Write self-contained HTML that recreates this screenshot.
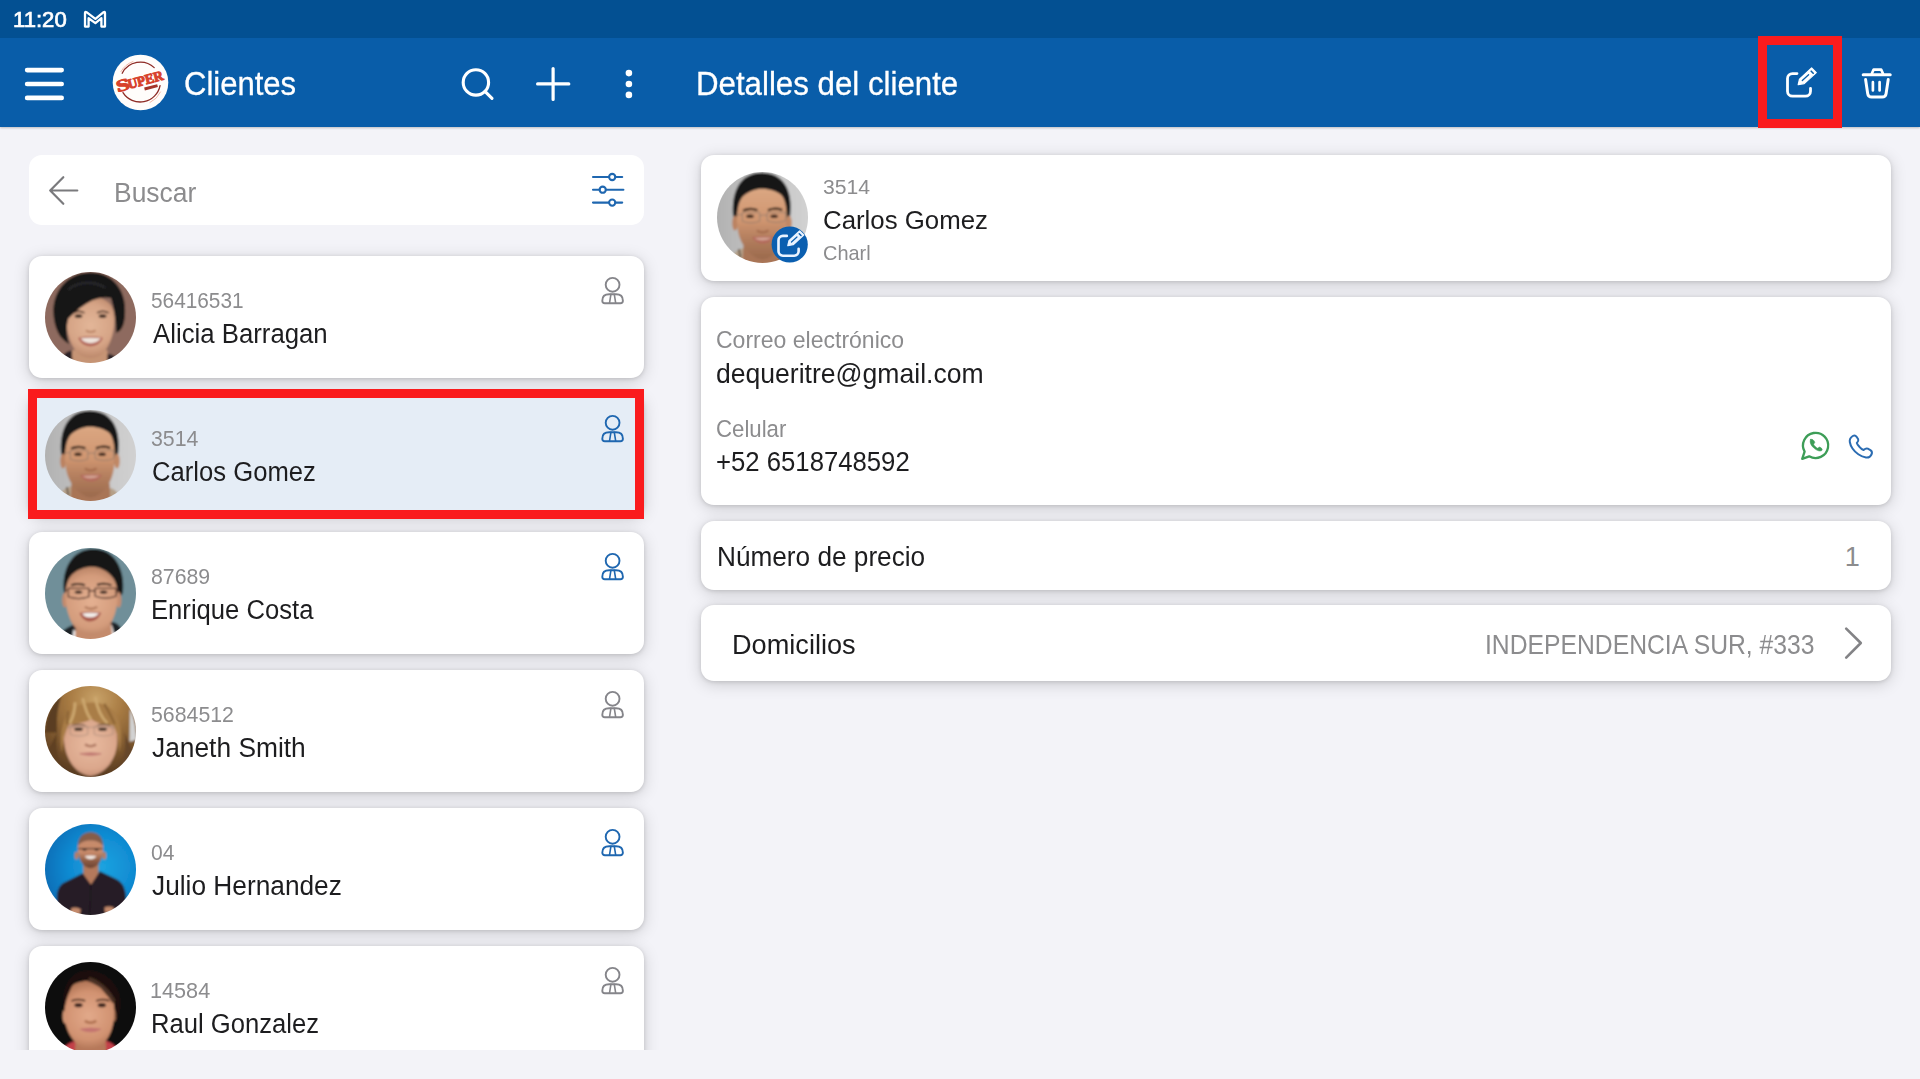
<!DOCTYPE html>
<html><head><meta charset="utf-8"><title>Clientes</title>
<style>
html,body{margin:0;padding:0}
body{width:1920px;height:1079px;overflow:hidden;background:#f3f3f8;position:relative;font-family:'Liberation Sans', sans-serif}
.abs{position:absolute}
.t{position:absolute;white-space:pre;line-height:1;transform-origin:0 0;font-family:'Liberation Sans', sans-serif}
.status{position:absolute;left:0;top:0;width:1920px;height:38px;background:#035092}
.header{position:absolute;left:0;top:38px;width:1920px;height:89px;background:#095da9;box-shadow:0 1px 2px rgba(0,0,0,.22)}
.card{position:absolute;background:#fff;border-radius:13px;box-shadow:0 3px 16px rgba(0,0,0,.17),0 1px 4px rgba(0,0,0,.13)}
.card.sel{background:#e5edf6}
.search{position:absolute;left:29px;top:155px;width:615px;height:70px;background:#fff;border-radius:13px}
.redbox{position:absolute;border:9px solid #fa1b1d;box-sizing:border-box}
#list{position:absolute;left:0;top:127px;width:672px;height:923px;overflow:hidden}
#listin{position:absolute;left:0;top:-127px;width:672px;height:1300px}
svg{position:absolute;overflow:visible}
</style></head><body>
<div id="list"><div id="listin">
<div class="search"></div>
<div class="card" style="left:29px;top:256px;width:615px;height:122px"></div>
<div class="card sel" style="left:29px;top:394px;width:615px;height:122px"></div>
<div class="card" style="left:29px;top:532px;width:615px;height:122px"></div>
<div class="card" style="left:29px;top:670px;width:615px;height:122px"></div>
<div class="card" style="left:29px;top:808px;width:615px;height:122px"></div>
<div class="card" style="left:29px;top:946px;width:615px;height:122px"></div>

<svg class="abs" style="left:44.5px;top:271.5px" width="91" height="91" viewBox="0 0 91 91">
<defs><clipPath id="cp0"><circle cx="45.5" cy="45.5" r="45.5"/></clipPath><filter id="bl0" x="-10%" y="-10%" width="120%" height="120%"><feGaussianBlur stdDeviation="9"/></filter><radialGradient id="f0" gradientUnits="userSpaceOnUse" cx="540" cy="640" r="360"><stop offset="0" stop-color="#e3b698"/><stop offset=".65" stop-color="#d6a486"/><stop offset="1" stop-color="#b98568"/></radialGradient></defs>
<g clip-path="url(#cp0)"><g transform="translate(-4.5 -5.5) scale(0.09268)"><g filter="url(#bl0)"><rect x="0" y="0" width="1079" height="1079" fill="#8e6b5f"/>
<path d="M330,1079 L345,900 H720 L740,1079 Z" fill="#c69475"/>
<path d="M200,1079 C215,960 270,915 335,905 L350,1079 Z M860,1079 C850,990 800,950 725,945 L715,1079Z" fill="#2b2327"/>
<path d="M275,560 C268,420 360,330 540,330 C720,330 805,420 800,580 C795,730 740,880 660,950 C600,1000 480,1000 420,950 C330,880 282,720 275,560 Z" fill="url(#f0)"/>
<path d="M350,500 Q410,465 475,500 M610,500 Q670,465 735,500" stroke="#3d2a20" stroke-width="16" fill="none"/>
<ellipse cx="410" cy="535" rx="42" ry="20" fill="#3a2a22"/><ellipse cx="670" cy="535" rx="42" ry="20" fill="#3a2a22"/>
<path d="M490,690 Q540,720 595,690" stroke="#b57d5e" stroke-width="20" fill="none"/>
<path d="M405,770 Q540,740 675,770 Q640,860 540,862 Q440,860 405,770Z" fill="#b4685a"/>
<path d="M435,775 Q540,760 650,775 Q620,825 540,828 Q460,825 435,775Z" fill="#efe4dc"/>
<path d="M140,520 C120,230 330,60 545,65 C760,60 935,240 912,520 C905,640 870,700 815,715 C815,600 800,470 760,340 C700,325 620,340 560,365 C470,410 380,480 300,560 C275,640 280,750 310,835 C200,780 150,660 140,520 Z" fill="#131313"/>
<path d="M300,250 C400,160 580,150 700,230" stroke="#26262b" stroke-width="30" fill="none"/></g></g></g></svg>
<svg class="abs" style="left:44.5px;top:409.5px" width="91" height="91" viewBox="0 0 91 91">
<defs><clipPath id="cp1"><circle cx="45.5" cy="45.5" r="45.5"/></clipPath><filter id="bl1" x="-10%" y="-10%" width="120%" height="120%"><feGaussianBlur stdDeviation="9"/></filter><linearGradient id="b1" gradientUnits="userSpaceOnUse" x1="50" x2="1030" y1="0" y2="0"><stop offset="0" stop-color="#b2b2b2"/><stop offset=".5" stop-color="#c4c4c4"/><stop offset="1" stop-color="#d1d1d1"/></linearGradient>
<linearGradient id="f1" gradientUnits="userSpaceOnUse" x1="0" x2="0" y1="240" y2="1010"><stop offset="0" stop-color="#dba782"/><stop offset=".45" stop-color="#cf9570"/><stop offset=".68" stop-color="#b5805f"/><stop offset="1" stop-color="#9a694c"/></linearGradient></defs>
<g clip-path="url(#cp1)"><g transform="translate(-4.5 -5.5) scale(0.09268)"><g filter="url(#bl1)"><rect x="0" y="0" width="1079" height="1079" fill="url(#b1)"/>
<path d="M180,1079 C210,940 260,890 350,880 L740,900 C800,905 850,950 880,1079 Z" fill="#b5a088"/>
<path d="M320,1079 L335,850 H745 L755,1079 Z" fill="#a97557"/>
<path d="M285,890 L300,980" stroke="#3a2a20" stroke-width="14" fill="none"/>
<path d="M222,530 C200,290 290,68 530,68 C790,68 865,290 838,530 L800,640 L262,640 Z" fill="#181818"/>
<ellipse cx="243" cy="610" rx="30" ry="80" fill="#bb8260"/><ellipse cx="825" cy="610" rx="30" ry="80" fill="#c18865"/>
<path d="M262,540 C270,440 290,360 330,320 C400,262 470,240 530,240 C610,240 700,265 750,315 C785,360 800,450 802,540 C805,700 770,810 720,880 C670,950 610,1000 540,1000 C470,1000 410,950 355,880 C300,810 258,700 262,540 Z" fill="url(#f1)"/>
<path d="M330,475 Q405,440 485,472 M598,472 Q675,440 752,470" stroke="#2a1c14" stroke-width="24" fill="none"/>
<ellipse cx="405" cy="537" rx="42" ry="19" fill="#3a281e"/><ellipse cx="665" cy="537" rx="42" ry="19" fill="#3a281e"/>
<path d="M262,520 H322 M512,530 Q550,515 590,530 M790,520 H802 M322,495 H510 V590 Q415,625 322,590Z M590,495 H790 V585 Q690,620 590,585Z" stroke="#8b776a" stroke-width="8" fill="none"/>
<path d="M478,690 Q540,730 605,690" stroke="#a66c4e" stroke-width="24" fill="none"/>
<path d="M425,762 Q540,745 665,758 Q620,830 540,832 Q465,830 425,762Z" fill="#b3695b"/>
<path d="M455,772 Q540,762 640,770 Q600,798 540,798 Q480,798 455,772Z" fill="#d3a595"/></g></g></g></svg>
<svg class="abs" style="left:44.5px;top:547.5px" width="91" height="91" viewBox="0 0 91 91">
<defs><clipPath id="cp2"><circle cx="45.5" cy="45.5" r="45.5"/></clipPath><filter id="bl2" x="-10%" y="-10%" width="120%" height="120%"><feGaussianBlur stdDeviation="9"/></filter><radialGradient id="f2" gradientUnits="userSpaceOnUse" cx="550" cy="640" r="400"><stop offset="0" stop-color="#e4b091"/><stop offset=".7" stop-color="#d49c7c"/><stop offset="1" stop-color="#b47e61"/></radialGradient></defs>
<g clip-path="url(#cp2)"><g transform="translate(-4.5 -5.5) scale(0.09268)"><g filter="url(#bl2)"><rect x="0" y="0" width="1079" height="1079" fill="#6f8f99"/>
<path d="M170,1079 C200,960 280,920 350,890 L790,860 C850,880 900,940 930,1079 Z" fill="#1b2127"/>
<path d="M340,1079 L355,940 L540,1050 L770,890 L820,1079 Z" fill="#ecebec"/>
<path d="M372,1079 L380,880 H760 L775,1000 L700,1079 Z" fill="#c48b6c"/>
<path d="M252,520 C230,300 330,70 570,70 C800,65 915,290 890,540 L830,640 L270,640 Z" fill="#171717"/>
<ellipse cx="262" cy="620" rx="28" ry="80" fill="#c38a6c"/><ellipse cx="845" cy="620" rx="28" ry="85" fill="#c68d6f"/>
<path d="M270,560 C272,470 290,400 340,345 C400,290 480,262 560,262 C640,265 720,300 790,390 C820,440 832,500 832,580 C830,720 790,830 740,900 C690,960 620,1000 550,1000 C480,1000 410,960 360,900 C310,830 268,700 270,560 Z" fill="url(#f2)"/>
<path d="M330,462 Q400,432 480,462 M610,458 Q690,430 765,462" stroke="#2b1d16" stroke-width="22" fill="none"/>
<ellipse cx="410" cy="535" rx="42" ry="17" fill="#30221b"/><ellipse cx="680" cy="535" rx="42" ry="17" fill="#30221b"/>
<path d="M262,515 H300 M522,525 Q555,512 590,525 M815,515 H850 M300,495 H522 V585 Q410,625 300,585Z M590,495 H815 V580 Q700,620 590,580Z" stroke="#4a2f27" stroke-width="13" fill="none"/>
<path d="M478,695 Q545,735 612,695" stroke="#b0795b" stroke-width="24" fill="none"/>
<path d="M420,760 Q535,735 655,758 Q620,850 535,852 Q455,850 420,760Z" fill="#a8574a"/>
<path d="M448,765 Q535,750 632,763 Q600,808 535,810 Q470,808 448,765Z" fill="#f3eeea"/></g></g></g></svg>
<svg class="abs" style="left:44.5px;top:685.5px" width="91" height="91" viewBox="0 0 91 91">
<defs><clipPath id="cp3"><circle cx="45.5" cy="45.5" r="45.5"/></clipPath><filter id="bl3" x="-10%" y="-10%" width="120%" height="120%"><feGaussianBlur stdDeviation="9"/></filter><radialGradient id="h3" gradientUnits="userSpaceOnUse" cx="600" cy="200" r="820"><stop offset="0" stop-color="#c8a268"/><stop offset=".35" stop-color="#a87b43"/><stop offset=".75" stop-color="#7a552d"/><stop offset="1" stop-color="#5a3c21"/></radialGradient>
<radialGradient id="f3" gradientUnits="userSpaceOnUse" cx="540" cy="690" r="380"><stop offset="0" stop-color="#e9bba0"/><stop offset=".7" stop-color="#dba78c"/><stop offset="1" stop-color="#bd876c"/></radialGradient></defs>
<g clip-path="url(#cp3)"><g transform="translate(-4.5 -5.5) scale(0.09268)"><g filter="url(#bl3)"><rect x="0" y="0" width="1079" height="1079" fill="url(#h3)"/>
<path d="M965,300 C1000,380 1030,480 1035,640 L960,660 Z" fill="#d2d2d2"/>
<path d="M50,560 C60,380 120,240 230,150 C180,300 170,420 180,560 Z" fill="#5a3d22"/>
<path d="M180,560 C150,760 200,960 330,1070 L200,1079 L60,800 Z" fill="#5e4023"/>
<path d="M905,560 C935,740 890,950 790,1060 L900,1079 L1010,800 Z" fill="#66462a"/>
<path d="M252,640 C247,500 300,400 420,370 C540,350 720,360 790,440 C835,520 835,650 818,740 C790,880 690,1010 540,1030 C400,1020 272,880 252,640 Z" fill="url(#f3)"/>
<path d="M232,780 C195,560 250,350 380,285 C540,195 725,235 815,365 C880,470 875,640 852,780 C848,640 825,540 780,480 C700,490 610,462 545,415 C500,450 380,472 310,472 C265,545 242,650 232,780 Z" fill="#a97d46"/>
<path d="M455,190 C478,290 500,370 545,420 M590,175 C610,290 655,400 722,462 M372,235 C372,330 350,400 315,462" stroke="#cda86f" stroke-width="30" fill="none"/>
<path d="M300,330 C290,400 285,440 290,470 M690,250 C730,330 770,400 800,470" stroke="#8a6234" stroke-width="22" fill="none"/>
<path d="M340,487 Q410,462 485,487 M610,487 Q680,462 750,487" stroke="#75553f" stroke-width="16" fill="none"/>
<ellipse cx="410" cy="525" rx="46" ry="20" fill="#46352b"/><ellipse cx="670" cy="525" rx="46" ry="20" fill="#46352b"/>
<path d="M290,505 H800 M320,492 q95,-15 190,0 v90 q-95,35 -190,0z M580,492 q100,-15 200,0 v90 q-100,35 -200,0z" stroke="#a98c7a" stroke-width="8" fill="none"/>
<path d="M480,690 Q540,730 600,690" stroke="#b17a64" stroke-width="28" fill="none"/>
<path d="M425,790 Q540,770 655,790 Q540,825 425,790Z" fill="#c17a72" stroke="#c17a72" stroke-width="10"/></g></g></g></svg>
<svg class="abs" style="left:44.5px;top:823.5px" width="91" height="91" viewBox="0 0 91 91">
<defs><clipPath id="cp4"><circle cx="45.5" cy="45.5" r="45.5"/></clipPath><filter id="bl4" x="-10%" y="-10%" width="120%" height="120%"><feGaussianBlur stdDeviation="9"/></filter><radialGradient id="b4" gradientUnits="userSpaceOnUse" cx="660" cy="520" r="640"><stop offset="0" stop-color="#1ba3e0"/><stop offset=".55" stop-color="#108bd2"/><stop offset="1" stop-color="#0a6db6"/></radialGradient>
<linearGradient id="f4" gradientUnits="userSpaceOnUse" x1="0" x2="0" y1="150" y2="540"><stop offset="0" stop-color="#c58c6e"/><stop offset=".55" stop-color="#c88a6a"/><stop offset=".8" stop-color="#8c5a42"/><stop offset="1" stop-color="#6a4230"/></linearGradient></defs>
<g clip-path="url(#cp4)"><g transform="translate(-4.5 -5.5) scale(0.09268)"><g filter="url(#bl4)"><rect x="0" y="0" width="1079" height="1079" fill="url(#b4)"/>
<path d="M462,480 H625 V650 L545,720 L462,650 Z" fill="#b4795b"/>
<path d="M178,900 C170,770 200,710 290,675 L455,590 L545,715 L640,570 L810,650 C895,690 925,760 922,900 L910,1079 H185 Z" fill="#271e26"/>
<path d="M545,715 L530,1040" stroke="#1a141a" stroke-width="12" fill="none"/>
<ellipse cx="388" cy="400" rx="20" ry="42" fill="#b87d5f"/><ellipse cx="688" cy="400" rx="20" ry="42" fill="#b87d5f"/>
<path d="M402,330 C400,210 460,150 540,150 C620,150 680,210 676,330 C675,440 620,535 540,538 C460,535 404,440 402,330 Z" fill="url(#f4)"/>
<path d="M404,300 C400,200 460,148 540,148 C620,148 680,200 674,300 C640,215 440,215 404,300Z" fill="#6a4a3c" opacity=".7"/>
<path d="M405,325 H672" stroke="#3a2a25" stroke-width="12" fill="none"/>
<ellipse cx="475" cy="335" rx="24" ry="12" fill="#3a2a25"/><ellipse cx="605" cy="335" rx="24" ry="12" fill="#3a2a25"/>
<path d="M478,405 Q540,395 602,405 Q580,440 540,440 Q500,440 478,405Z" fill="#f0e6e0"/>
<path d="M330,970 q50,-25 105,10 l-10,50 h-95z M690,960 q50,-20 100,0 l0,55 h-95z" fill="#c48a6c"/></g></g></g></svg>
<svg class="abs" style="left:44.5px;top:961.5px" width="91" height="91" viewBox="0 0 91 91">
<defs><clipPath id="cp5"><circle cx="45.5" cy="45.5" r="45.5"/></clipPath><filter id="bl5" x="-10%" y="-10%" width="120%" height="120%"><feGaussianBlur stdDeviation="9"/></filter><radialGradient id="f5" gradientUnits="userSpaceOnUse" cx="520" cy="640" r="400"><stop offset="0" stop-color="#e2a98a"/><stop offset=".65" stop-color="#d19271"/><stop offset="1" stop-color="#a86d4f"/></radialGradient></defs>
<g clip-path="url(#cp5)"><g transform="translate(-4.5 -5.5) scale(0.09268)"><g filter="url(#bl5)"><rect x="0" y="0" width="1079" height="1079" fill="#0d0b09"/>
<path d="M200,1079 C240,960 320,915 400,905 L690,905 C760,915 830,960 860,1079 Z" fill="#c33f49"/>
<path d="M370,1079 L380,860 H700 L712,1079 Z" fill="#b6785a"/>
<ellipse cx="268" cy="645" rx="30" ry="80" fill="#d19676"/><ellipse cx="795" cy="640" rx="22" ry="65" fill="#946046"/>
<path d="M255,590 C255,450 290,350 360,300 C420,262 520,250 600,270 C700,300 790,420 798,560 C800,700 770,820 720,890 C670,960 610,1000 535,1000 C460,1000 395,960 345,890 C295,820 255,720 255,590 Z" fill="url(#f5)"/>
<path d="M255,600 C220,400 280,200 440,160 C600,120 790,210 850,400 C880,520 850,640 815,720 C815,620 810,540 792,500 C730,440 680,370 645,335 C570,280 480,250 430,245 C370,270 340,310 322,360 C285,430 265,520 255,600 Z" fill="#1a110c"/>
<path d="M520,240 C640,280 740,380 790,490" stroke="#4c3125" stroke-width="42" fill="none"/>
<path d="M335,480 Q405,452 482,480 M600,480 Q670,452 742,478" stroke="#46291e" stroke-width="20" fill="none"/>
<ellipse cx="410" cy="525" rx="44" ry="23" fill="#38221a"/><ellipse cx="662" cy="525" rx="44" ry="23" fill="#38221a"/>
<path d="M478,695 Q540,735 602,695" stroke="#ae6f4e" stroke-width="28" fill="none"/>
<path d="M430,785 Q540,760 650,785 Q540,840 430,785Z" fill="#c3736f" stroke="#c3736f" stroke-width="10"/></g></g></g></svg>
<!--LEFTTEXT-->
</div></div>
<div class="card" style="left:701px;top:155px;width:1190px;height:126px"></div>
<div class="card" style="left:701px;top:297px;width:1190px;height:208px"></div>
<div class="card" style="left:701px;top:521px;width:1190px;height:69px"></div>
<div class="card" style="left:701px;top:605px;width:1190px;height:76px"></div>

<div class="header"></div>
<div class="status"></div>
<svg id="hdr" class="abs" style="left:0;top:0" width="1920" height="130" viewBox="0 0 1920 130" fill="none" stroke="#fff" stroke-linecap="round" stroke-linejoin="round">
<!-- gmail M -->
<path d="M85,26.6 V13 Q85,11.2 86.5,12.2 L95.4,18.9 L103.6,12.2 Q105,11.2 105,13 V26.6 H101.4 V18.2 L95.4,23.1 L88.6,18.2 V26.6 Z" stroke-width="2.3"/>
<!-- hamburger -->
<path d="M27.1,70.1 H61.7 M27.1,84 H61.7 M27.1,97.9 H61.7" stroke-width="4.6"/>
<!-- logo -->
<circle cx="140.5" cy="82.5" r="27.8" fill="#fffdfb" stroke="none"/>
<path d="M122.2,73.2 A20.3,20.3 0 0 1 154.2,67.6" stroke="#8e2b25" stroke-width="1.3"/>
<path d="M160.05,85.6 A20.3,20.3 0 0 1 123,92.6" stroke="#8e2b25" stroke-width="1.3"/>
<path d="M121,71.5 A22.3,22.3 0 0 1 133,61.5 M160.5,92 A22.3,22.3 0 0 1 150,102.5" stroke="#f3b9a8" stroke-width="1"/>
<g transform="rotate(-15 140.5 83)" stroke="none" fill="#d7422c">
<text x="116.2" y="86.2" font-family="'Liberation Serif', serif" font-weight="bold" font-size="16.8" textLength="13.5" lengthAdjust="spacingAndGlyphs" stroke="#d7422c" stroke-width="1">S</text>
<text x="127.8" y="85.8" font-family="'Liberation Serif', serif" font-weight="bold" font-size="13.8" textLength="36.5" lengthAdjust="spacingAndGlyphs" stroke="#d7422c" stroke-width="1">UPER</text>
<rect x="142.8" y="88.4" width="13.5" height="3" fill="#a5342a"/>
</g>
<!-- search -->
<circle cx="475.9" cy="82.4" r="12.7" stroke-width="3.1"/>
<path d="M485.2,91.6 L492,98.4" stroke-width="3.1"/>
<!-- plus -->
<path d="M537.6,83.9 H568.8 M553.1,68.5 V99.4" stroke-width="3.2"/>
<!-- dots -->
<g fill="#fff" stroke="none"><circle cx="628.9" cy="73.1" r="3.3"/><circle cx="628.9" cy="84" r="3.3"/><circle cx="628.9" cy="94.9" r="3.3"/></g>
<!-- edit -->
<g id="editic">
<path d="M1797,73.6 H1792.5 a5,5 0 0 0 -5,5 V91.2 a5,5 0 0 0 5,5 H1805.5 a5,5 0 0 0 5,-5 V88.3" stroke-width="2.8"/>
<path d="M1798.2,84.6 L1799.5,79.2 L1811.6,68 L1816.3,72.6 L1804.2,83.6 Z" fill="#fff" stroke-width="1.2"/>
<path d="M1802.3,80.6 L1808.6,74.8" stroke="#095da9" stroke-width="1.3"/>
<path d="M1811.2,71.2 L1813.2,73.2" stroke="#095da9" stroke-width="1.6"/>
</g>
<!-- trash -->
<path d="M1863.2,74.7 H1890.2" stroke-width="3"/>
<path d="M1871.8,73.6 L1873.6,69.6 H1881.2 L1883,73.6" stroke-width="2.6"/>
<path d="M1865.6,79.6 L1867.7,93.6 a4,4 0 0 0 4,3.5 H1882.1 a4,4 0 0 0 4,-3.5 L1888.2,79.6" stroke-width="3"/>
<path d="M1872.9,82.2 V90.4 M1879.6,82.2 V90.4" stroke-width="2.7"/>
</svg>

<svg class="abs" style="left:716.6px;top:171.7px" width="91" height="91" viewBox="0 0 91 91">
<defs><clipPath id="cp9"><circle cx="45.5" cy="45.5" r="45.5"/></clipPath><filter id="bl9" x="-10%" y="-10%" width="120%" height="120%"><feGaussianBlur stdDeviation="9"/></filter><linearGradient id="b9" gradientUnits="userSpaceOnUse" x1="50" x2="1030" y1="0" y2="0"><stop offset="0" stop-color="#b2b2b2"/><stop offset=".5" stop-color="#c4c4c4"/><stop offset="1" stop-color="#d1d1d1"/></linearGradient>
<linearGradient id="f9" gradientUnits="userSpaceOnUse" x1="0" x2="0" y1="240" y2="1010"><stop offset="0" stop-color="#dba782"/><stop offset=".45" stop-color="#cf9570"/><stop offset=".68" stop-color="#b5805f"/><stop offset="1" stop-color="#9a694c"/></linearGradient></defs>
<g clip-path="url(#cp9)"><g transform="translate(-4.5 -5.5) scale(0.09268)"><g filter="url(#bl9)"><rect x="0" y="0" width="1079" height="1079" fill="url(#b9)"/>
<path d="M180,1079 C210,940 260,890 350,880 L740,900 C800,905 850,950 880,1079 Z" fill="#b5a088"/>
<path d="M320,1079 L335,850 H745 L755,1079 Z" fill="#a97557"/>
<path d="M285,890 L300,980" stroke="#3a2a20" stroke-width="14" fill="none"/>
<path d="M222,530 C200,290 290,68 530,68 C790,68 865,290 838,530 L800,640 L262,640 Z" fill="#181818"/>
<ellipse cx="243" cy="610" rx="30" ry="80" fill="#bb8260"/><ellipse cx="825" cy="610" rx="30" ry="80" fill="#c18865"/>
<path d="M262,540 C270,440 290,360 330,320 C400,262 470,240 530,240 C610,240 700,265 750,315 C785,360 800,450 802,540 C805,700 770,810 720,880 C670,950 610,1000 540,1000 C470,1000 410,950 355,880 C300,810 258,700 262,540 Z" fill="url(#f9)"/>
<path d="M330,475 Q405,440 485,472 M598,472 Q675,440 752,470" stroke="#2a1c14" stroke-width="24" fill="none"/>
<ellipse cx="405" cy="537" rx="42" ry="19" fill="#3a281e"/><ellipse cx="665" cy="537" rx="42" ry="19" fill="#3a281e"/>
<path d="M262,520 H322 M512,530 Q550,515 590,530 M790,520 H802 M322,495 H510 V590 Q415,625 322,590Z M590,495 H790 V585 Q690,620 590,585Z" stroke="#8b776a" stroke-width="8" fill="none"/>
<path d="M478,690 Q540,730 605,690" stroke="#a66c4e" stroke-width="24" fill="none"/>
<path d="M425,762 Q540,745 665,758 Q620,830 540,832 Q465,830 425,762Z" fill="#b3695b"/>
<path d="M455,772 Q540,762 640,770 Q600,798 540,798 Q480,798 455,772Z" fill="#d3a595"/></g></g></g></svg>
<svg class="abs" style="left:0;top:0" width="1920" height="1079" viewBox="0 0 1920 1079" fill="none" stroke-linecap="round" stroke-linejoin="round">
<path d="M77.3,190.5 H50.6 M63.3,177.2 L50.2,190.5 L63.3,203.8" stroke="#7a7a7d" stroke-width="2.2"/>
<g stroke="#1f67b0" stroke-width="2.1"><path d="M593,177 H609 M615.4,177 H622.2 M593,189.7 H599.5 M605.9,189.7 H623.4 M593,202.6 H609 M615.4,202.6 H622.2"/><circle cx="612.2" cy="177" r="3.1"/><circle cx="602.7" cy="189.7" r="3.1"/><circle cx="612.2" cy="202.6" r="3.1"/></g>
<g stroke="#85858a" stroke-width="1.9"><circle cx="612.6" cy="284.8" r="6.9"/><path d="M602.3000000000001,300.7 C602.3000000000001,296.5 605.0,294.3 609.2,294.3 H616.0 C620.2,294.3 622.9,296.5 622.9,300.7 A2.5,2.5 0 0 1 620.4,303.2 H604.8000000000001 A2.5,2.5 0 0 1 602.3000000000001,300.7 Z"/><path d="M610.9,294.3 L609.5,303.2 M614.3000000000001,294.3 L615.7,303.2" stroke-width="1.6"/></g>
<g stroke="#1f67b0" stroke-width="1.9"><circle cx="612.6" cy="422.8" r="6.9"/><path d="M602.3000000000001,438.7 C602.3000000000001,434.5 605.0,432.3 609.2,432.3 H616.0 C620.2,432.3 622.9,434.5 622.9,438.7 A2.5,2.5 0 0 1 620.4,441.2 H604.8000000000001 A2.5,2.5 0 0 1 602.3000000000001,438.7 Z"/><path d="M610.9,432.3 L609.5,441.2 M614.3000000000001,432.3 L615.7,441.2" stroke-width="1.6"/></g>
<g stroke="#1f67b0" stroke-width="1.9"><circle cx="612.6" cy="560.8" r="6.9"/><path d="M602.3000000000001,576.7 C602.3000000000001,572.5 605.0,570.3 609.2,570.3 H616.0 C620.2,570.3 622.9,572.5 622.9,576.7 A2.5,2.5 0 0 1 620.4,579.2 H604.8000000000001 A2.5,2.5 0 0 1 602.3000000000001,576.7 Z"/><path d="M610.9,570.3 L609.5,579.2 M614.3000000000001,570.3 L615.7,579.2" stroke-width="1.6"/></g>
<g stroke="#85858a" stroke-width="1.9"><circle cx="612.6" cy="698.8" r="6.9"/><path d="M602.3000000000001,714.7 C602.3000000000001,710.5 605.0,708.3 609.2,708.3 H616.0 C620.2,708.3 622.9,710.5 622.9,714.7 A2.5,2.5 0 0 1 620.4,717.2 H604.8000000000001 A2.5,2.5 0 0 1 602.3000000000001,714.7 Z"/><path d="M610.9,708.3 L609.5,717.2 M614.3000000000001,708.3 L615.7,717.2" stroke-width="1.6"/></g>
<g stroke="#1f67b0" stroke-width="1.9"><circle cx="612.6" cy="836.8" r="6.9"/><path d="M602.3000000000001,852.7 C602.3000000000001,848.5 605.0,846.3 609.2,846.3 H616.0 C620.2,846.3 622.9,848.5 622.9,852.7 A2.5,2.5 0 0 1 620.4,855.2 H604.8000000000001 A2.5,2.5 0 0 1 602.3000000000001,852.7 Z"/><path d="M610.9,846.3 L609.5,855.2 M614.3000000000001,846.3 L615.7,855.2" stroke-width="1.6"/></g>
<g stroke="#85858a" stroke-width="1.9"><circle cx="612.6" cy="974.8" r="6.9"/><path d="M602.3000000000001,990.7 C602.3000000000001,986.5 605.0,984.3 609.2,984.3 H616.0 C620.2,984.3 622.9,986.5 622.9,990.7 A2.5,2.5 0 0 1 620.4,993.2 H604.8000000000001 A2.5,2.5 0 0 1 602.3000000000001,990.7 Z"/><path d="M610.9,984.3 L609.5,993.2 M614.3000000000001,984.3 L615.7,993.2" stroke-width="1.6"/></g>
<circle cx="789.7" cy="244.5" r="18.1" fill="#0b5fb0"/>
<g transform="translate(789.7 244.5) scale(0.875) translate(-1800.3 -83.4)" stroke="#e9f3ff"><path d="M1797,73.6 H1792.5 a5,5 0 0 0 -5,5 V91.2 a5,5 0 0 0 5,5 H1805.5 a5,5 0 0 0 5,-5 V88.3" stroke-width="3"/><path d="M1798.2,84.6 L1799.5,79.2 L1811.6,68 L1816.3,72.6 L1804.2,83.6 Z" fill="#e9f3ff" stroke-width="1.6"/><path d="M1802.3,80.6 L1808.6,74.8" stroke="#0b5fb0" stroke-width="1.4"/><path d="M1811.2,71.2 L1813.2,73.2" stroke="#0b5fb0" stroke-width="1.7"/></g>
<path d="M1802.2,458.8 L1804.6,451.6 A12.6,12.6 0 1 1 1809.2,456.3 Z" stroke="#3d9d57" stroke-width="2.3"/>
<path d="M1810.6,439.4 c-1.2,2.2 0,5.6 3,8.4 s6.6,4 8.4,2.5 c0.6,-1 -0.2,-2.2 -2.4,-3.2 l-2,1.2 c-1.5,-0.6 -3.4,-2.6 -4,-4 l1.2,-2 c-0.8,-2 -2.4,-3.6 -4.2,-2.9 z" fill="#3d9d57" stroke="#3d9d57" stroke-width=".6"/>
<path d="M1852.8,436 C1850.5,437.5 1849.4,439.5 1849.8,442 C1850.3,445 1851.3,446.8 1852.5,448.5 C1854,450.8 1856,452.6 1858.3,454.2 C1860.6,455.8 1863.3,457 1866,457.5 C1868.5,457.9 1870.5,456.5 1871.5,454.5 C1872.4,452.6 1872,451.2 1870.4,450.2 L1867.8,448.7 C1866.3,447.9 1865,448.7 1863.6,450 C1862,449.4 1860.6,448.2 1859.4,446.8 C1858.2,445.5 1857.2,444.2 1856.8,443 C1858,441.8 1858.8,440.8 1858.2,439.3 L1856.6,436.8 C1855.6,435.4 1854.2,435.2 1852.8,436 Z" stroke="#2b6cb2" stroke-width="2"/>
<path d="M1846.2,628.6 L1860.8,643 L1846.2,657.6" stroke="#838386" stroke-width="2.6"/>
</svg>
<span class="t" style="left:13.00px;top:8.55px;font-size:21.7px;color:#fff;font-weight:normal;transform:scaleX(1.0196);-webkit-text-stroke:0.7px #fff">11:20</span>
<span class="t" style="left:184.20px;top:67.06px;font-size:33.3px;color:#fff;font-weight:normal;transform:scaleX(0.9322);-webkit-text-stroke:0.3px #fff">Clientes</span>
<span class="t" style="left:696.00px;top:66.70px;font-size:33.3px;color:#fff;font-weight:normal;transform:scaleX(0.9382);-webkit-text-stroke:0.3px #fff">Detalles del cliente</span>
<span class="t" style="left:113.80px;top:179.90px;font-size:27.0px;color:#8c8c8e;font-weight:normal;transform:scaleX(0.9791);">Buscar</span>
<span class="t" style="left:151.40px;top:290.21px;font-size:21.8px;color:#8c8c8e;font-weight:normal;transform:scaleX(0.9539);">56416531</span>
<span class="t" style="left:152.60px;top:320.74px;font-size:27.0px;color:#1d1d1f;font-weight:normal;transform:scaleX(0.9541);">Alicia Barragan</span>
<span class="t" style="left:151.40px;top:428.21px;font-size:21.8px;color:#8c8c8e;font-weight:normal;transform:scaleX(0.9788);">3514</span>
<span class="t" style="left:151.60px;top:458.74px;font-size:27.0px;color:#1d1d1f;font-weight:normal;transform:scaleX(0.9494);">Carlos Gomez</span>
<span class="t" style="left:151.40px;top:566.21px;font-size:21.8px;color:#8c8c8e;font-weight:normal;transform:scaleX(0.9757);">87689</span>
<span class="t" style="left:150.60px;top:596.74px;font-size:27.0px;color:#1d1d1f;font-weight:normal;transform:scaleX(0.9491);">Enrique Costa</span>
<span class="t" style="left:151.40px;top:704.21px;font-size:21.8px;color:#8c8c8e;font-weight:normal;transform:scaleX(0.9775);">5684512</span>
<span class="t" style="left:151.60px;top:734.74px;font-size:27.0px;color:#1d1d1f;font-weight:normal;transform:scaleX(0.9755);">Janeth Smith</span>
<span class="t" style="left:151.40px;top:842.21px;font-size:21.8px;color:#8c8c8e;font-weight:normal;transform:scaleX(0.9678);">04</span>
<span class="t" style="left:151.60px;top:872.74px;font-size:27.0px;color:#1d1d1f;font-weight:normal;transform:scaleX(0.9731);">Julio Hernandez</span>
<span class="t" style="left:150.40px;top:980.21px;font-size:21.8px;color:#8c8c8e;font-weight:normal;transform:scaleX(0.9931);">14584</span>
<span class="t" style="left:150.60px;top:1010.74px;font-size:27.0px;color:#1d1d1f;font-weight:normal;transform:scaleX(0.9489);">Raul Gonzalez</span>
<span class="t" style="left:823.00px;top:177.31px;font-size:20.7px;color:#8c8c8e;font-weight:normal;transform:scaleX(1.0222);">3514</span>
<span class="t" style="left:823.00px;top:208.13px;font-size:25.8px;color:#1d1d1f;font-weight:normal;transform:scaleX(1.0006);">Carlos Gomez</span>
<span class="t" style="left:823.00px;top:242.15px;font-size:21px;color:#8c8c8e;font-weight:normal;transform:scaleX(0.9501);">Charl</span>
<span class="t" style="left:716.40px;top:328.30px;font-size:24.1px;color:#8c8c8e;font-weight:normal;transform:scaleX(0.9554);">Correo electrónico</span>
<span class="t" style="left:716.20px;top:360.39px;font-size:27.1px;color:#1d1d1f;font-weight:normal;transform:scaleX(0.9805);">dequeritre@gmail.com</span>
<span class="t" style="left:716.40px;top:416.89px;font-size:24.1px;color:#8c8c8e;font-weight:normal;transform:scaleX(0.9214);">Celular</span>
<span class="t" style="left:716.20px;top:448.39px;font-size:27.1px;color:#1d1d1f;font-weight:normal;transform:scaleX(0.9488);">+52 6518748592</span>
<span class="t" style="left:717.00px;top:543.12px;font-size:27.1px;color:#1d1d1f;font-weight:normal;transform:scaleX(0.9665);">Número de precio</span>
<span class="t" style="left:1844.85px;top:542.81px;font-size:27.1px;color:#8c8c8e;font-weight:normal;transform:scaleX(1.0000);">1</span>
<span class="t" style="left:731.60px;top:630.92px;font-size:27.1px;color:#1d1d1f;font-weight:normal;transform:scaleX(1.0017);">Domicilios</span>
<span class="t" style="left:1485.20px;top:630.76px;font-size:27.1px;color:#8c8c8e;font-weight:normal;transform:scaleX(0.9120);">INDEPENDENCIA SUR, #333</span>
<div class="redbox" style="left:28px;top:389px;width:616px;height:130px"></div>
<div class="redbox" style="left:1758px;top:36px;width:84px;height:92px"></div>
</body></html>
